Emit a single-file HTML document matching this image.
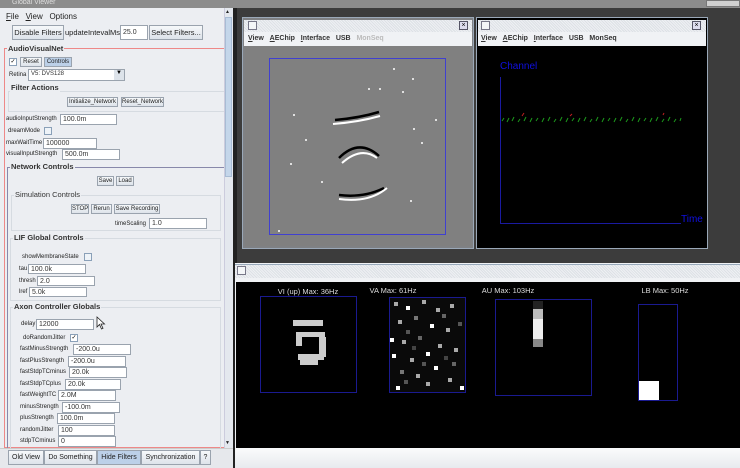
<!DOCTYPE html>
<html><head><style>
*{margin:0;padding:0;box-sizing:border-box}
body{width:740px;height:468px;overflow:hidden;background:#3c3c3c;font-family:"Liberation Sans",sans-serif;position:relative}
.a{position:absolute}
.t{position:absolute;font-size:7px;color:#222;white-space:nowrap;line-height:9px}
.b{position:absolute;font-size:6px;color:#222;border:1px solid #9aa3ae;background:linear-gradient(#f6f8fa,#dde3ea);text-align:center;line-height:8px;white-space:nowrap}
.i{position:absolute;background:#fff;border:1px solid #9aa3ae;font-size:7px;line-height:9px;padding-left:2px;color:#333}
.g{position:absolute;border:1px solid #d6dbe1}
.h{position:absolute;font-size:7.5px;font-weight:bold;color:#333;background:#eceef2;padding:0 1px;line-height:9px}
.c{position:absolute;width:8px;height:8px;border:1px solid #8aa0b8;background:#eef3f8;font-size:6px;line-height:6px;overflow:hidden;text-align:center}
.m{position:absolute;font-size:7px;color:#333;font-weight:bold}
</style></head><body>
<div class="a" style="left:0;top:0;width:740px;height:8px;background:#8c8c8c"></div>
<div class="t" style="left:12px;top:-2px;color:#ddd;font-size:7px">Global Viewer</div>
<div class="a" style="left:706px;top:0;width:34px;height:7px;background:#d0d0d0;border:1px solid #777"></div>
<div class="a" style="left:0;top:8px;width:233px;height:460px;background:#eceef2"></div>
<div class="t" style="left:6px;top:12px;font-size:8px"><u>F</u>ile &nbsp; <u>V</u>iew &nbsp;&nbsp;Options</div>
<div class="b" style="left:12px;top:25px;width:52px;height:15px;font-size:7.5px;line-height:13px">Disable Filters</div>
<div class="t" style="left:65px;top:28px;font-size:7.5px">updateIntevalMs</div>
<div class="i" style="left:120px;top:25px;width:28px;height:15px;line-height:13px">25.0</div>
<div class="b" style="left:149px;top:25px;width:54px;height:15px;font-size:7.5px;line-height:13px">Select Filters...</div>
<div class="a" style="left:4px;top:48px;width:221px;height:400px;border:1px solid #e88;border-right:none"></div>
<div class="h" style="left:7px;top:44px">AudioVisualNet</div>
<div class="c" style="left:9px;top:58px;background:#fff">✓</div>
<div class="b" style="left:20px;top:57px;width:22px;height:10px">Reset</div>
<div class="b" style="left:44px;top:57px;width:28px;height:10px;background:#bcd0e8">Controls</div>
<div class="t" style="left:9px;top:71px;font-size:6px">Retina</div>
<div class="i" style="left:28px;top:69px;width:97px;height:12px;font-size:6px">V5: DVS128</div>
<div class="a" style="left:114px;top:70px;width:10px;height:10px;background:#dde3ea;font-size:6px;text-align:center">▼</div>
<div class="g" style="left:8px;top:91px;width:217px;height:21px"></div>
<div class="h" style="left:10px;top:83px">Filter Actions</div>
<div class="b" style="left:67px;top:97px;width:51px;height:10px">Initialize_Network</div>
<div class="b" style="left:121px;top:97px;width:43px;height:10px">Reset_Network</div>
<div class="t" style="left:6px;top:115px;font-size:6px">audioInputStrength</div>
<div class="i" style="left:60px;top:114px;width:57px;height:11px">100.0m</div>
<div class="t" style="left:8px;top:127px;font-size:6px">dreamMode</div>
<div class="c" style="left:44px;top:127px"></div>
<div class="t" style="left:6px;top:139px;font-size:6px">maxWaitTime</div>
<div class="i" style="left:43px;top:138px;width:54px;height:11px">100000</div>
<div class="t" style="left:6px;top:150px;font-size:6px">visualInputStrength</div>
<div class="i" style="left:62px;top:149px;width:58px;height:11px">500.0m</div>
<div class="a" style="left:7px;top:167px;width:218px;height:281px;border:1px solid #88a;border-right:none;border-bottom:none"></div>
<div class="h" style="left:10px;top:162px">Network Controls</div>
<div class="b" style="left:97px;top:176px;width:17px;height:10px">Save</div>
<div class="b" style="left:116px;top:176px;width:18px;height:10px">Load</div>
<div class="g" style="left:11px;top:195px;width:210px;height:36px"></div>
<div class="h" style="left:14px;top:190px;font-weight:normal;color:#333">Simulation Controls</div>
<div class="b" style="left:71px;top:204px;width:18px;height:10px">STOP</div>
<div class="b" style="left:91px;top:204px;width:21px;height:10px">Rerun</div>
<div class="b" style="left:114px;top:204px;width:46px;height:10px">Save Recording</div>
<div class="t" style="left:115px;top:220px;font-size:6px">timeScaling</div>
<div class="i" style="left:149px;top:218px;width:58px;height:11px">1.0</div>
<div class="g" style="left:10px;top:238px;width:211px;height:63px"></div>
<div class="h" style="left:13px;top:233px">LIF Global Controls</div>
<div class="t" style="left:22px;top:253px;font-size:6px">showMembraneState</div>
<div class="c" style="left:84px;top:253px"></div>
<div class="t" style="left:19px;top:265px;font-size:6px">tau</div>
<div class="i" style="left:28px;top:264px;width:58px;height:10px">100.0k</div>
<div class="t" style="left:19px;top:277px;font-size:6px">thresh</div>
<div class="i" style="left:37px;top:276px;width:58px;height:10px">2.0</div>
<div class="t" style="left:19px;top:288px;font-size:6px">lref</div>
<div class="i" style="left:29px;top:287px;width:58px;height:10px">5.0k</div>
<div class="g" style="left:10px;top:307px;width:211px;height:141px;border-bottom:none"></div>
<div class="h" style="left:13px;top:302px">Axon Controller Globals</div>
<div class="t" style="left:21px;top:320px;font-size:6px">delay</div>
<div class="i" style="left:36px;top:319px;width:58px;height:11px">12000</div>
<div class="t" style="left:23px;top:334px;font-size:6px">doRandomJitter</div>
<div class="c" style="left:70px;top:334px;background:#fff">✓</div>
<div class="t" style="left:20px;top:345px;font-size:6px">fastMinusStrength</div><div class="i" style="left:73px;top:344px;width:58px;height:11px">-200.0u</div>
<div class="t" style="left:20px;top:357px;font-size:6px">fastPlusStrength</div><div class="i" style="left:68px;top:356px;width:58px;height:11px">-200.0u</div>
<div class="t" style="left:20px;top:368px;font-size:6px">fastStdpTCminus</div><div class="i" style="left:69px;top:367px;width:58px;height:11px">20.0k</div>
<div class="t" style="left:20px;top:380px;font-size:6px">fastStdpTCplus</div><div class="i" style="left:65px;top:379px;width:56px;height:11px">20.0k</div>
<div class="t" style="left:20px;top:391px;font-size:6px">fastWeightTC</div><div class="i" style="left:58px;top:390px;width:58px;height:11px">2.0M</div>
<div class="t" style="left:20px;top:403px;font-size:6px">minusStrength</div><div class="i" style="left:62px;top:402px;width:58px;height:11px">-100.0m</div>
<div class="t" style="left:20px;top:414px;font-size:6px">plusStrength</div><div class="i" style="left:57px;top:413px;width:58px;height:11px">100.0m</div>
<div class="t" style="left:20px;top:426px;font-size:6px">randomJitter</div><div class="i" style="left:58px;top:425px;width:57px;height:11px">100</div>
<div class="t" style="left:20px;top:437px;font-size:6px">stdpTCminus</div><div class="i" style="left:58px;top:436px;width:58px;height:11px">0</div>
<svg class="a" style="left:96px;top:316px" width="10" height="14"><path d="M1 1V11L3.5 8.5 5.5 13 7 12.3 5 8H8.5Z" fill="#fff" stroke="#222" stroke-width="0.8"/></svg>
<div class="a" style="left:224px;top:8px;width:9px;height:440px;background:#e4e8ee;border-left:1px solid #ccd"></div>
<div class="a" style="left:225px;top:17px;width:7px;height:160px;background:#c4d6ea;border:1px solid #a8bcd4"></div>
<div class="t" style="left:225px;top:8px;font-size:5px">▲</div>
<div class="t" style="left:225px;top:439px;font-size:5px">▼</div>
<div class="a" style="left:0;top:448px;width:233px;height:20px;background:#e6e8ec;border-top:1px solid #ccc"></div>
<div class="b" style="left:8px;top:450px;width:36px;height:15px;font-size:7px;line-height:13px">Old View</div>
<div class="b" style="left:44px;top:450px;width:53px;height:15px;font-size:7px;line-height:13px">Do Something</div>
<div class="b" style="left:97px;top:450px;width:44px;height:15px;font-size:7px;line-height:13px;background:#bcd0e8">Hide Filters</div>
<div class="b" style="left:141px;top:450px;width:59px;height:15px;font-size:7px;line-height:13px">Synchronization</div>
<div class="b" style="left:200px;top:450px;width:11px;height:15px;font-size:7px;line-height:13px">?</div>
<div class="a" style="left:233px;top:8px;width:4px;height:460px;background:#222"></div>
<div class="a" style="left:242px;top:17px;width:232px;height:232px;background:#7f8184;border:1px solid #9aa8b8"></div>
<div class="a" style="left:244px;top:20px;width:228px;height:12px;background:repeating-linear-gradient(45deg,#eef0f3 0 1px,#dde1e6 1px 2px)"></div>
<div class="a" style="left:248px;top:21px;width:9px;height:9px;border:1px solid #778;background:#f4f6f8"></div>
<div class="a" style="left:459px;top:21px;width:9px;height:9px;border:1px solid #556;background:#dde;font-size:7px;line-height:7px;text-align:center">×</div>
<div class="a" style="left:244px;top:32px;width:228px;height:14px;background:#f0f2f5"></div>
<div class="m" style="left:248px;top:35px"><u>V</u>iew &nbsp;&nbsp;<u>A</u>EChip &nbsp;&nbsp;<u>I</u>nterface &nbsp;&nbsp;USB &nbsp;&nbsp;<span style="color:#bbb">MonSeq</span></div>
<div class="a" style="left:245px;top:46px;width:226px;height:200px;background:#808080"></div>
<svg class="a" style="left:269px;top:58px" width="178" height="178">
<rect x="0.5" y="0.5" width="176" height="176" fill="none" stroke="#4040d0"/>
<g fill="#fff"><circle cx="125" cy="11" r="1"/><circle cx="144" cy="21" r="1"/><circle cx="100" cy="31" r="1"/><circle cx="111" cy="31" r="1"/><circle cx="134" cy="34" r="1"/><circle cx="25" cy="57" r="1"/><circle cx="167" cy="62" r="1"/><circle cx="145" cy="71" r="1"/><circle cx="37" cy="82" r="1"/><circle cx="22" cy="106" r="1"/><circle cx="153" cy="85" r="1"/><circle cx="53" cy="124" r="1"/><circle cx="142" cy="143" r="1"/><circle cx="10" cy="173" r="1"/></g>
<path d="M66 62 Q90 60 110 54" stroke="#000" stroke-width="2.5" fill="none"/><path d="M64 66 Q90 64 111 58" stroke="#fff" stroke-width="2" fill="none"/>
<path d="M70 100 Q90 80 110 98" stroke="#000" stroke-width="2.5" fill="none"/><path d="M73 105 Q92 88 108 100" stroke="#fff" stroke-width="2" fill="none"/>
<path d="M70 137 Q95 140 115 130" stroke="#000" stroke-width="2.5" fill="none"/><path d="M70 141 Q100 145 118 130" stroke="#fff" stroke-width="2" fill="none"/>
</svg>
<div class="a" style="left:476px;top:17px;width:232px;height:232px;background:#000;border:1px solid #9aa8b8"></div>
<div class="a" style="left:478px;top:20px;width:228px;height:12px;background:repeating-linear-gradient(45deg,#eef0f3 0 1px,#dde1e6 1px 2px)"></div>
<div class="a" style="left:481px;top:21px;width:9px;height:9px;border:1px solid #778;background:#f4f6f8"></div>
<div class="a" style="left:692px;top:21px;width:9px;height:9px;border:1px solid #556;background:#dde;font-size:7px;line-height:7px;text-align:center">×</div>
<div class="a" style="left:478px;top:32px;width:228px;height:14px;background:#f0f2f5"></div>
<div class="m" style="left:481px;top:35px"><u>V</u>iew &nbsp;&nbsp;<u>A</u>EChip &nbsp;&nbsp;<u>I</u>nterface &nbsp;&nbsp;USB &nbsp;&nbsp;MonSeq</div>
<svg class="a" style="left:478px;top:46px" width="228" height="200">
<text x="22" y="23" fill="#1010e0" font-size="10" font-family="Liberation Sans">Channel</text>
<path d="M22.5 31V177.5H203" stroke="#1a1aa0" fill="none"/>
<text x="203" y="176" fill="#1010e0" font-size="10" font-family="Liberation Sans">Time</text>
<path d="M24 75l2-3M29 76l2-4M34 75l2-4M40 76l2-3M46 75l2-4M52 76l2-4M58 75l2-3M64 76l2-4M70 75l2-4M76 76l2-3M82 75l2-4M88 76l2-4M94 75l2-3M100 76l2-4M106 75l2-4M112 76l2-3M118 75l2-4M124 76l2-4M130 75l2-3M136 76l2-4M142 75l2-4M148 76l2-3M154 75l2-4M160 76l2-4M166 75l2-3M172 76l2-4M178 75l2-4M184 76l2-3M190 75l2-4M196 76l2-3M202 75l1-3" stroke="#1c9a1c" stroke-width="1"/>
<path d="M44 70l2-3M92 70l2-2M185 69l1-2" stroke="#c02020"/>
</svg>
<div class="a" style="left:235px;top:263px;width:505px;height:205px;background:#f0f2f5"></div>
<div class="a" style="left:235px;top:264px;width:505px;height:14px;background:repeating-linear-gradient(45deg,#eef0f3 0 1px,#dde1e6 1px 2px);border-top:1px solid #9ab"></div>
<div class="a" style="left:237px;top:266px;width:9px;height:9px;border:1px solid #778;background:#f4f6f8"></div>
<div class="a" style="left:236px;top:282px;width:504px;height:166px;background:#000"></div>
<div class="a" style="left:235px;top:448px;width:505px;height:20px;background:linear-gradient(#fafbfc,#e8eaee)"></div>
<svg class="a" style="left:236px;top:282px" width="504" height="166" font-family="Liberation Sans" font-size="7.5" fill="#ddd">
<text x="72" y="12" text-anchor="middle">VI (up) Max: 36Hz</text>
<text x="157" y="11" text-anchor="middle">VA Max: 61Hz</text>
<text x="272" y="11" text-anchor="middle">AU Max: 103Hz</text>
<text x="429" y="11" text-anchor="middle">LB Max: 50Hz</text>
<rect x="24.5" y="14.5" width="96" height="96" fill="none" stroke="#1a1a90"/>
<g fill="#ccc"><rect x="57" y="38" width="30" height="6"/><rect x="61" y="50" width="28" height="5"/><rect x="60" y="50" width="6" height="14"/><rect x="83" y="55" width="7" height="20"/><rect x="62" y="72" width="26" height="6"/><rect x="64" y="78" width="18" height="5"/></g>
<rect x="153.5" y="15.5" width="76" height="95" fill="#0a0a0a" stroke="#1a1a90"/>
<g fill="#aaa"><rect x="158" y="20" width="4" height="4"/><rect x="170" y="24" width="4" height="4" fill="#fff"/><rect x="186" y="18" width="4" height="4"/><rect x="200" y="26" width="4" height="4"/><rect x="214" y="22" width="4" height="4"/><rect x="162" y="38" width="4" height="4"/><rect x="178" y="34" width="4" height="4" fill="#777"/><rect x="194" y="42" width="4" height="4" fill="#fff"/><rect x="210" y="46" width="4" height="4"/><rect x="166" y="58" width="4" height="4"/><rect x="182" y="54" width="4" height="4" fill="#666"/><rect x="202" y="62" width="4" height="4"/><rect x="156" y="72" width="4" height="4" fill="#fff"/><rect x="174" y="76" width="4" height="4"/><rect x="190" y="70" width="4" height="4" fill="#fff"/><rect x="218" y="66" width="4" height="4"/><rect x="164" y="88" width="4" height="4" fill="#777"/><rect x="180" y="92" width="4" height="4"/><rect x="198" y="84" width="4" height="4" fill="#fff"/><rect x="212" y="96" width="4" height="4"/><rect x="160" y="104" width="4" height="4" fill="#fff"/><rect x="190" y="100" width="4" height="4"/><rect x="224" y="104" width="4" height="4" fill="#fff"/><rect x="206" y="32" width="4" height="4" fill="#666"/><rect x="170" y="48" width="4" height="4" fill="#555"/><rect x="186" y="80" width="4" height="4" fill="#555"/><rect x="216" y="80" width="4" height="4" fill="#666"/><rect x="154" y="56" width="4" height="4" fill="#fff"/><rect x="208" y="74" width="4" height="4" fill="#444"/><rect x="168" y="98" width="4" height="4" fill="#555"/><rect x="222" y="40" width="4" height="4" fill="#555"/><rect x="176" y="64" width="4" height="4" fill="#444"/></g>
<rect x="259.5" y="17.5" width="96" height="96" fill="none" stroke="#1a1a90"/>
<rect x="297" y="19" width="10" height="8" fill="#222"/><rect x="297" y="27" width="10" height="10" fill="#bbb"/><rect x="297" y="37" width="10" height="20" fill="#eee"/><rect x="297" y="57" width="10" height="8" fill="#888"/>
<rect x="402.5" y="22.5" width="39" height="96" fill="none" stroke="#1a1a90"/>
<rect x="403" y="99" width="20" height="19" fill="#fff"/>
</svg>
</body></html>
